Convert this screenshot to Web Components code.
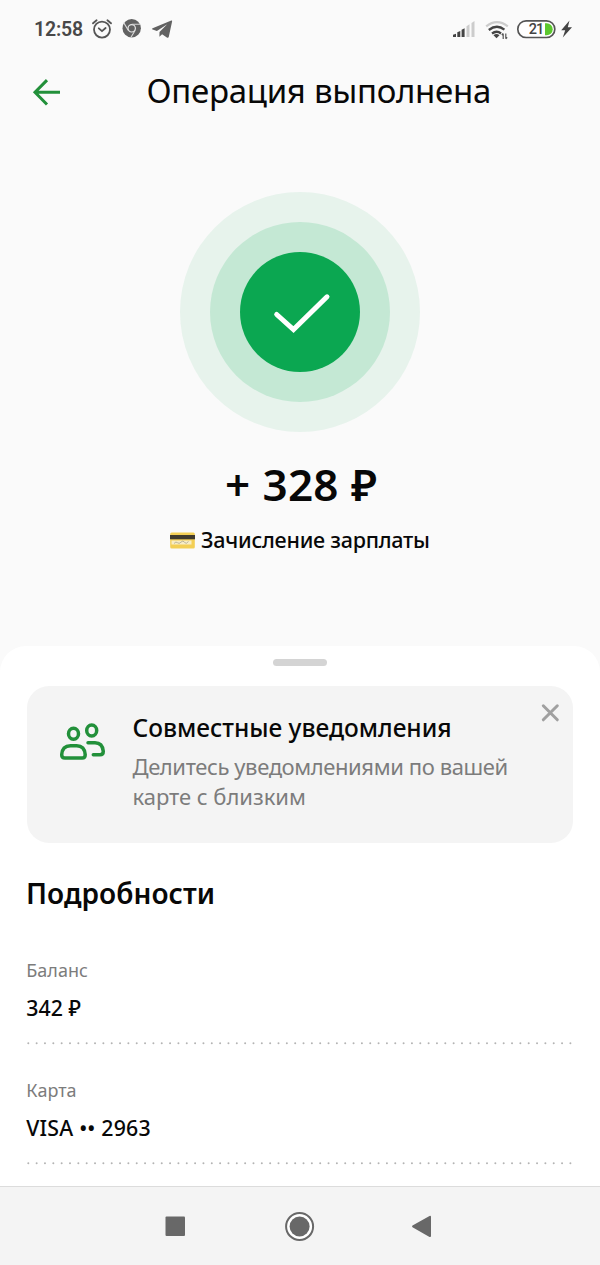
<!DOCTYPE html>
<html lang="ru">
<head>
<meta charset="utf-8">
<title>Операция выполнена</title>
<style>
html, body { margin: 0; height: 1265px; overflow: hidden; background: #fafafa; }
body { font-family: "Noto Sans", "Open Sans", sans-serif; color: #080808; }
</style>
</head>
<body>
<operation-screen></operation-screen>
<script>
const define = (name, html) => {
  const template = document.createElement('template');
  template.innerHTML = html;
  customElements.define(name, class extends HTMLElement {
    constructor() {
      super();
      this.attachShadow({ mode: 'open' }).append(template.content.cloneNode(true));
    }
  });
};

define('status-bar', `
<style>
:host { display: flex; justify-content: space-between; height: 58px; box-sizing: border-box; padding: 0 27px 0 34px; color: #484848; }
div { display: flex; align-items: center; height: 58px; }
span { font: 600 19.5px/24px Roboto, sans-serif; width: 58px; letter-spacing: -.2px; padding-top: 1px; }
svg { display: block; }
</style>
<div>
  <span>12:58</span>
  <svg width="84" height="24" viewBox="92 17 84 24">
    <g fill="none" stroke="#555" stroke-width="1.8" stroke-linecap="round" stroke-linejoin="round">
      <circle cx="102" cy="29.6" r="8"/>
      <path d="M98.800 28.300l3.200 2.900 3.600-3.200M93 23.300l3.600-3M111 23.300l-3.600-3"/>
    </g>
    <circle cx="131.700" cy="28.300" r="9.200" fill="#626262"/>
    <circle cx="131.700" cy="28.300" r="3.700" fill="#626262" stroke="#e8e8e8" stroke-width="1.200"/>
    <path d="M131.700 24.300h8.600M128.200 30.200l-4.500-7.600M135.200 30.300l-4.500 7.500" stroke="#d8d8d8" stroke-width="1.100" fill="none"/>
    <path d="M171.300 20.600L152.600 28.200q-1.500.7 0 1.300l4.300 1.400 10.300-6.600-7.700 7.800-.1 4.600 2.700-2.500 5.100 3.500q1.200.5 1.600-.9l3.300-15.200q.2-1.400-.8-1z" fill="#626262"/>
  </svg>
</div>
<div>
  <svg width="122" height="24" viewBox="451 17 122 24">
    <path d="M453 37v-2.300l3-1V37zM457.300 37v-4.700l3-1.200V37zM461.600 37v-7.300l3-1.500V37z" fill="#444"/>
    <path d="M466.500 37V26.300l3-2V37zM471.500 37V23l3-2V37z" fill="#ccc"/>
    <g fill="none" stroke-width="2.300">
      <path d="M486.200 26.300q10.800-8.300 21.600 0" stroke="#ccc"/>
      <path d="M488.800 30q8-6.200 15.600-.4M492 33.500q4.700-3.600 9 0" stroke="#444"/>
    </g>
    <path d="M493.500 35.200q3-2.200 6 0l-3 3z" fill="#444"/>
    <path d="M503.200 39v-5.200M501.800 35l1.400-1.600M505.800 33.500v5.200M507.200 37.300l-1.400 1.600" stroke="#555" stroke-width="1.200" fill="none"/>
    <rect x="517.800" y="20.800" width="37" height="16.700" rx="8.300" fill="#fff" stroke="#555" stroke-width="1.700"/>
    <path d="M545 23.200h1.700a6 6 0 0 1 0 12H545z" fill="#5cc82e"/>
    <text x="528.800" y="34.300" font-family="Roboto, sans-serif" font-size="14.500" font-weight="500" fill="#444" textLength="15.500">21</text>
    <path d="M569.500 20.500l-8.300 9.800h4l-2.400 7.200 9.200-10.200h-4.200z" fill="#444"/>
  </svg>
</div>`);

define('app-header', `
<style>
:host { display: flex; height: 68px; padding-left: 32px; }
svg { display: block; margin-top: 20px; }
h1 { margin: 2px 0 0 84.500px; font-size: 33px; line-height: 62px; font-weight: 400; letter-spacing: -.29px; white-space: nowrap; }
</style>
<svg width="30" height="28" viewBox="32 78 30 28" fill="none" stroke="#22903a" stroke-width="3"><path d="M60 92.300H35.500M47 80.100L35 92.300l12 12.200"/></svg>
<h1><slot></slot></h1>`);

define('success-mark', `
<style>
:host { display: grid; place-items: center; width: 240px; height: 240px; margin: 66px auto 0; border-radius: 50%; background: #e7f3ec; }
.mid { display: grid; place-items: center; width: 180px; height: 180px; border-radius: 50%; background: #c4e8d4; }
.core { width: 120px; height: 120px; border-radius: 50%; background: #0ba751; }
</style>
<div class="mid"><div class="core">
  <svg width="120" height="120" viewBox="0 0 120 120"><path d="M36.700 62.500L53.500 77.500 87 44.800" fill="none" stroke="#fff" stroke-width="5" stroke-linecap="round"/></svg>
</div></div>`);

define('amount-summary', `
<style>
:host { display: block; padding-top: 27px; white-space: nowrap; }
.sum { padding-left: 225px; font-size: 44px; line-height: 50px; font-weight: 600; letter-spacing: .2px; word-spacing: .6px; }
.note { display: flex; align-items: center; margin-top: 16px; padding-left: 170px; font-size: 21.5px; line-height: 30px; font-weight: 500; letter-spacing: -.24px; }
svg { display: block; margin-right: 6px; }
</style>
<div class="sum"><slot name="sum"></slot></div>
<div class="note">
  <svg width="25" height="17" viewBox="0 0 25 17"><rect x=".2" y=".5" width="24.600" height="16" rx="1.500" fill="#f3cf55"/><path d="M0 3h25v4.300H0z" fill="#3f3a2c"/><path d="M1.500 8.500h20v4h-20z" fill="#f8edc4"/><path d="M4 11.500q2-2.500 3.500-.8t3.500-.6 3.500.2 4-.8" stroke="#aaa58e" stroke-width=".8" fill="none"/></svg>
  <slot></slot>
</div>`);

define('notice-banner', `
<style>
:host { position: relative; display: flex; height: 156.500px; box-sizing: border-box; padding: 26px 0 0 32px; border-radius: 22px; background: #f4f4f4; }
.people { display: block; flex: none; margin: 9px 25.500px 0 0; }
h2 { margin: 0 0 7px; font-size: 24.5px; line-height: 32px; font-weight: 500; letter-spacing: -.02px; white-space: nowrap; }
p { margin: 0; font-size: 22px; line-height: 30px; color: #7c7c7c; white-space: nowrap; letter-spacing: -.4px; }
p + p { letter-spacing: -.03px; }
.close { position: absolute; top: 17px; right: 13.500px; }
</style>
<svg class="people" width="48" height="40" viewBox="59 721 48 40" fill="none" stroke="#22903a" stroke-width="3.500" stroke-linecap="round">
  <ellipse cx="73.500" cy="733.800" rx="5" ry="5.500"/>
  <ellipse cx="91.700" cy="730.500" rx="5" ry="5.500"/>
  <path d="M70.500 745.700h6.200q8 0 8.500 9 0 3.300-3 3.300H65q-3.300 0-3.300-3.300.5-9 8.800-9z"/>
  <path d="M88 742.700h7q7.500 0 8.300 8.600 0 3.500-3.300 3.500h-6.700"/>
</svg>
<div><h2><slot name="title"></slot></h2><p><slot name="first"></slot></p><p><slot name="second"></slot></p></div>
<svg class="close" width="20" height="20" viewBox="0 0 20 20" stroke="#a0a0a0" stroke-width="3" stroke-linecap="round"><path d="M3.300 2.800l14 14M17.300 2.800l-14 14"/></svg>`);

define('detail-row', `
<style>
:host { display: block; height: 120px; white-space: nowrap; }
.label { margin-left: -.7px; font-size: 18px; line-height: 24px; color: #7c7c7c; }
.value { margin: 12px 0 0 -.7px; font-size: 21.3px; line-height: 28px; font-weight: 500; letter-spacing: var(--track, 0); }
svg { display: block; margin-top: 19px; }
</style>
<div class="label"><slot name="label"></slot></div>
<div class="value"><slot></slot></div>
<svg width="546" height="4"><path d="M1.300 2.300H546" stroke="#b4b4b4" stroke-width="2" stroke-linecap="round" stroke-dasharray="0 8.340"/></svg>`);

define('details-sheet', `
<style>
:host { display: block; flex: 1; min-height: 0; overflow: hidden; box-sizing: border-box; padding: 13px 27px 0; background: #fff; border-radius: 26px 26px 0 0; }
.grip { width: 54px; height: 7px; margin: 0 auto 20px; border-radius: 4px; background: #d4d4d4; }
h2 { margin: 32.500px 0 47px -1px; font-size: 28px; line-height: 36px; font-weight: 600; letter-spacing: .05px; }
</style>
<div class="grip"></div>
<slot name="banner"></slot>
<h2><slot name="heading"></slot></h2>
<slot></slot>`);

define('nav-bar', `
<style>
:host { display: block; height: 79px; box-sizing: border-box; border-top: 1px solid #dcdcdc; background: #f4f4f4; }
svg { display: block; }
</style>
<svg width="600" height="78" viewBox="0 1187 600 78" fill="#686868">
  <rect x="165.500" y="1216.500" width="19.500" height="19.500" rx="1"/>
  <circle cx="299.600" cy="1226.500" r="13.500" fill="#fff" stroke="#686868" stroke-width="2"/>
  <circle cx="299.600" cy="1226.500" r="10"/>
  <path d="M412.500 1225.600l17-9.700q1.500-.6 1.500 1v19q0 1.600-1.500 1l-17-9.700q-1-.8 0-1.600z"/>
</svg>`);

define('operation-screen', `
<style>
:host { display: flex; flex-direction: column; height: 1265px; }
.hero { height: 520px; }
</style>
<status-bar></status-bar>
<app-header>Операция выполнена</app-header>
<div class="hero">
  <success-mark></success-mark>
  <amount-summary><span slot="sum">+ 328 ₽</span>Зачисление зарплаты</amount-summary>
</div>
<details-sheet>
  <notice-banner slot="banner">
    <span slot="title">Совместные уведомления</span>
    <span slot="first">Делитесь уведомлениями по вашей</span>
    <span slot="second">карте с близким</span>
  </notice-banner>
  <span slot="heading">Подробности</span>
  <detail-row><span slot="label">Баланс</span>342 ₽</detail-row>
  <detail-row style="--track:.2px"><span slot="label">Карта</span>VISA •• 2963</detail-row>
</details-sheet>
<nav-bar></nav-bar>`);
</script>
</body>
</html>
